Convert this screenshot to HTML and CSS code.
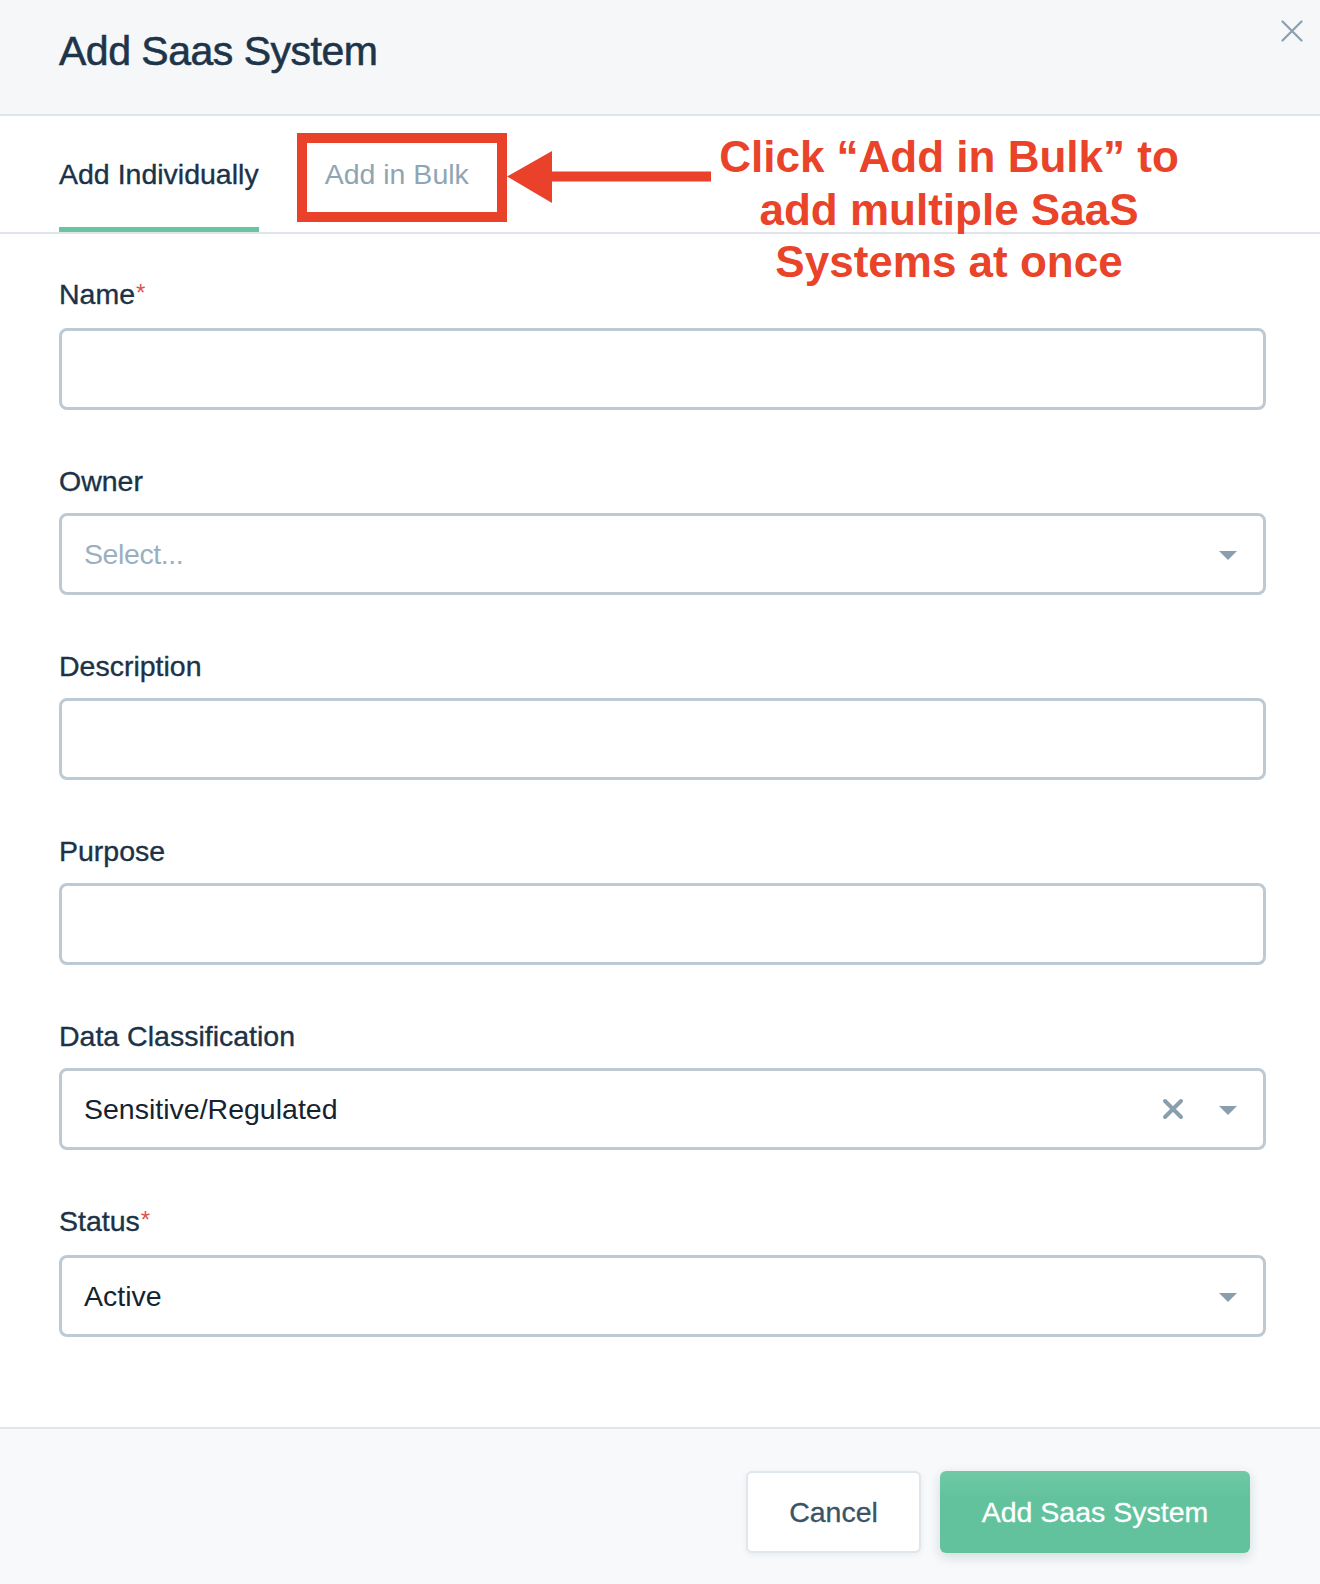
FILE: index.html
```html
<!DOCTYPE html>
<html lang="en">
<head>
<meta charset="utf-8">
<title>Add Saas System</title>
<link rel="stylesheet" href="styles.css">
</head>
<body>
<div class="modal">
  <header class="modal-header">
    <h1 class="modal-title">Add Saas System</h1>
    <button class="close-btn" aria-label="Close">
      <svg width="22" height="22" viewBox="0 0 22 22"><path d="M1.5 1.5 L20.5 20.5 M20.5 1.5 L1.5 20.5" stroke="#8ba0b0" stroke-width="2.2" stroke-linecap="round" fill="none"/></svg>
    </button>
  </header>

  <nav class="tabs">
    <div class="tab tab-active">Add Individually</div>
    <div class="tab">Add in Bulk</div>
  </nav>

  <form class="form">
    <div class="field">
      <label class="label">Name<span class="req">*</span></label>
      <div class="input"></div>
    </div>
    <div class="field">
      <label class="label">Owner</label>
      <div class="input select">
        <span class="placeholder">Select...</span>
        <span class="icons"><span class="caret"></span></span>
      </div>
    </div>
    <div class="field">
      <label class="label">Description</label>
      <div class="input"></div>
    </div>
    <div class="field">
      <label class="label">Purpose</label>
      <div class="input"></div>
    </div>
    <div class="field">
      <label class="label">Data Classification</label>
      <div class="input select">
        <span class="value">Sensitive/Regulated</span>
        <span class="icons">
          <svg class="clear" width="22" height="22" viewBox="0 0 22 22"><path d="M3 3 L19 19 M19 3 L3 19" stroke="#8a9fae" stroke-width="4" stroke-linecap="round" fill="none"/></svg>
          <span class="caret"></span>
        </span>
      </div>
    </div>
    <div class="field">
      <label class="label">Status<span class="req">*</span></label>
      <div class="input select">
        <span class="value">Active</span>
        <span class="icons"><span class="caret"></span></span>
      </div>
    </div>
  </form>

  <footer class="modal-footer">
    <button class="btn btn-cancel" type="button">Cancel</button>
    <button class="btn btn-primary" type="button">Add Saas System</button>
  </footer>

  <div class="callout-box"></div>
  <svg class="callout-arrow" width="210" height="56" viewBox="0 0 210 56">
    <polygon points="0,25.5 45,0 45,52" fill="#e9412a"/>
    <rect x="44" y="20.5" width="160" height="10" fill="#e9412a"/>
  </svg>
  <div class="callout-text">Click “Add in Bulk” to<br>add multiple SaaS<br>Systems at once</div>
</div>
</body>
</html>
```

FILE: styles.css
```css
* { box-sizing: border-box; }

html, body {
  margin: 0;
  padding: 0;
  background: #ffffff;
}

body {
  font-family: "Liberation Sans", Arial, Helvetica, sans-serif;
  color: #1b3247;
}

.modal {
  position: relative;
  width: 1320px;
  height: 1584px;
  display: flex;
  flex-direction: column;
  overflow: hidden;
}

.modal-header {
  position: relative;
  height: 116px;
  background: #f5f7f9;
  border-bottom: 2px solid #dfe5ea;
  padding: 27px 0 0 59px;
}

.modal-title {
  margin: 0;
  font-size: 41px;
  line-height: 48px;
  font-weight: 400;
  letter-spacing: -0.5px;
  color: #1e3549;
  -webkit-text-stroke: 0.6px #1e3549;
}

.close-btn {
  position: absolute;
  top: 20px;
  right: 17px;
  width: 22px;
  height: 22px;
  padding: 0;
  border: 0;
  background: transparent;
  display: block;
}
.close-btn svg { display: block; }

.tabs {
  display: flex;
  gap: 66px;
  padding-left: 59px;
  border-bottom: 2px solid #dfe5ea;
}

.tab {
  height: 116px;
  padding-top: 5px;
  display: flex;
  align-items: center;
  font-size: 28.5px;
  color: #8fa5b4;
  border-bottom: 5px solid transparent;
}

.tab-active {
  color: #1b3247;
  border-bottom-color: #69c5a0;
  -webkit-text-stroke: 0.35px #1b3247;
}

.form {
  padding: 40px 54px 0 59px;
  display: flex;
  flex-direction: column;
  gap: 51px;
}

.field {
  display: flex;
  flex-direction: column;
  gap: 12px;
}

.label {
  font-size: 28.5px;
  line-height: 40px;
  color: #1b3247;
  -webkit-text-stroke: 0.35px #1b3247;
}

.req {
  color: #e0514f;
  font-size: 24px;
  -webkit-text-stroke: 0;
  position: relative;
  top: -3px;
  margin-left: 1px;
}

.input {
  height: 82px;
  border: 3px solid #bdcad4;
  border-radius: 8px;
  background: #ffffff;
  display: flex;
  align-items: center;
  padding: 0 26px 0 22px;
  font-size: 28.5px;
}

.placeholder { color: #9bb0bf; flex: 1; letter-spacing: -0.4px; }
.value { color: #15222f; flex: 1; }

.icons {
  display: flex;
  align-items: center;
  gap: 35px;
}

.clear { display: block; }

.caret {
  width: 0;
  height: 0;
  border-left: 9px solid transparent;
  border-right: 9px solid transparent;
  border-top: 9px solid #8a9fae;
  margin-top: 2px;
}

.modal-footer {
  margin-top: auto;
  height: 157px;
  background: #f7f9fb;
  border-top: 2px solid #dfe5ea;
  display: flex;
  justify-content: flex-end;
  align-items: flex-start;
  gap: 19px;
  padding: 42px 70px 0 0;
}

.btn {
  height: 82px;
  font-family: "Liberation Sans", Arial, Helvetica, sans-serif;
  font-size: 28.5px;
  border-radius: 6px;
  cursor: pointer;
}

.btn-cancel {
  width: 175px;
  background: #ffffff;
  border: 2px solid #dfe6ec;
  color: #3b5366;
  box-shadow: 0 2px 6px rgba(30, 50, 70, 0.06);
  -webkit-text-stroke: 0.3px #3b5366;
}

.btn-primary {
  width: 310px;
  background: linear-gradient(#70c9a6, #62c29d 35%, #62c29d);
  border: 0;
  color: #ffffff;
  box-shadow: 0 4px 12px rgba(30, 60, 50, 0.16);
  -webkit-text-stroke: 0.3px #ffffff;
}

/* annotation overlay */
.callout-box {
  position: absolute;
  left: 297px;
  top: 133px;
  width: 210px;
  height: 89px;
  border: 10px solid #e9412a;
}

.callout-arrow {
  position: absolute;
  left: 507px;
  top: 151px;
}

.callout-text {
  position: absolute;
  left: 700px;
  top: 131px;
  width: 498px;
  text-align: center;
  font-size: 44px;
  line-height: 52.5px;
  font-weight: 700;
  color: #e9432a;
}
```
